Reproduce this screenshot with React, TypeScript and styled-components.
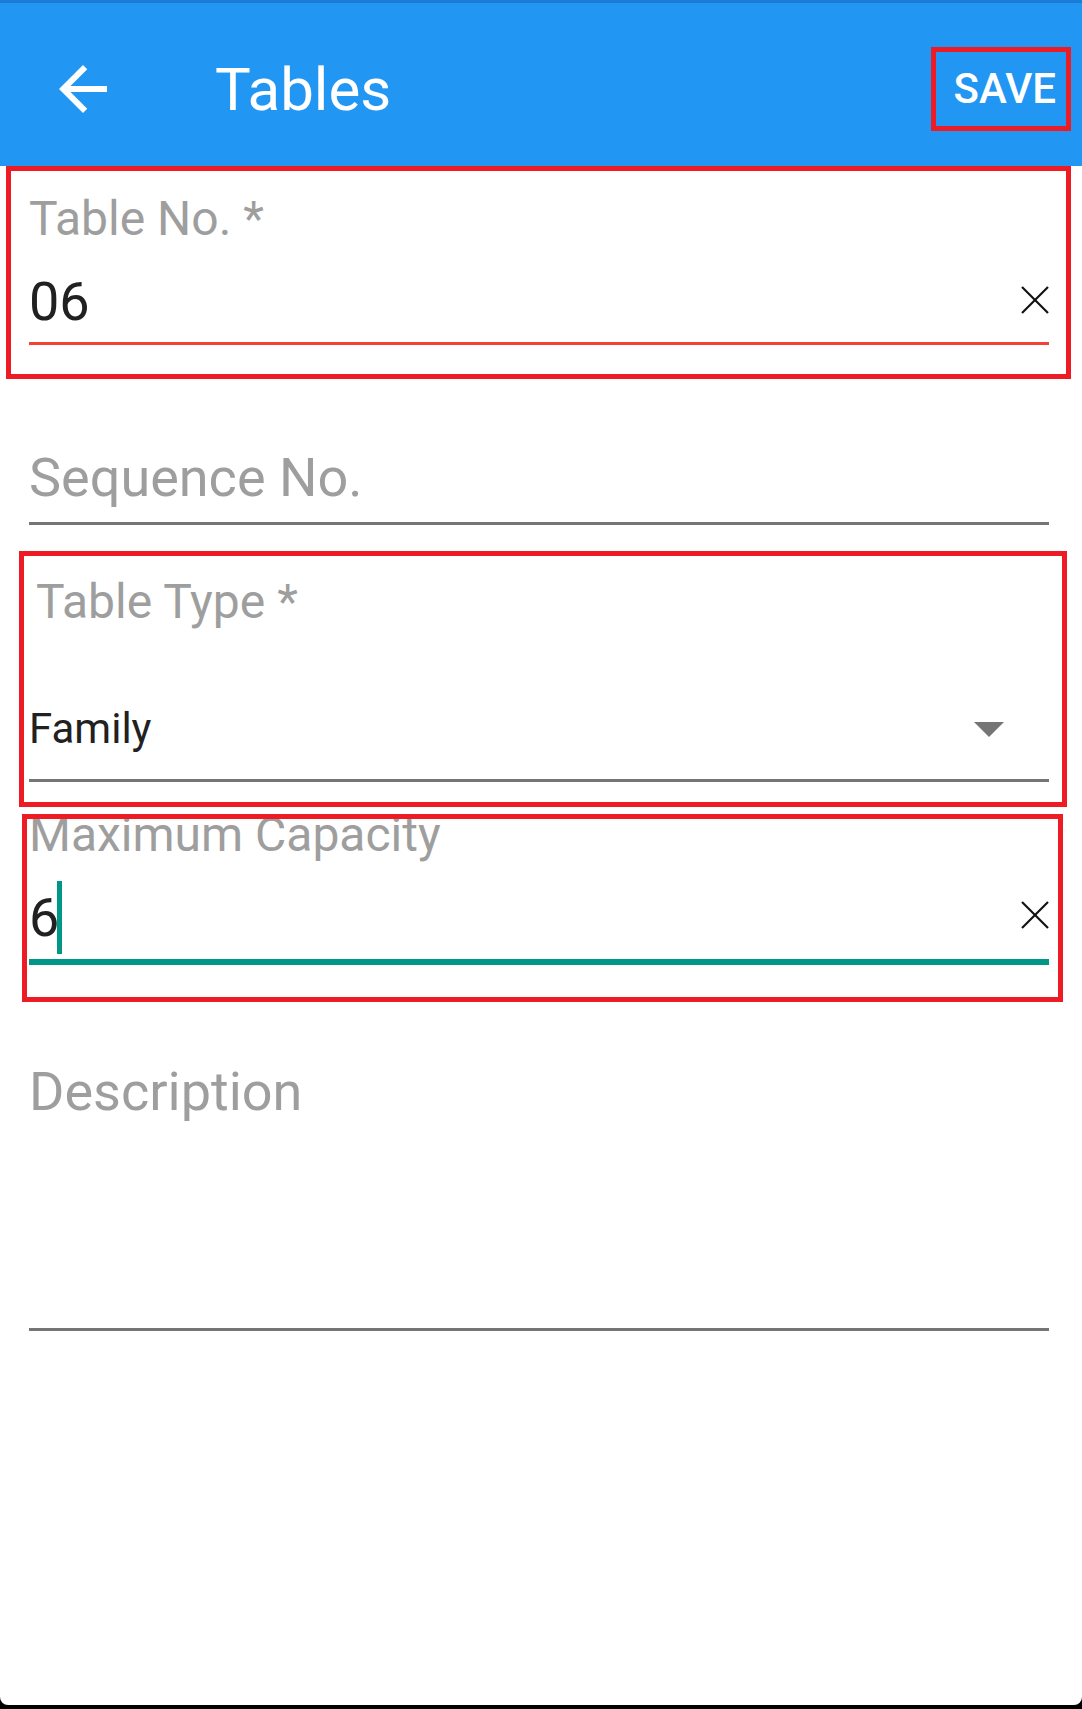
import React from "react";
import styled, { createGlobalStyle } from "styled-components";

const GlobalStyle = createGlobalStyle`
  html, body {
    margin: 0;
    padding: 0;
    background: #000;
  }
  body {
    font-family: Roboto, "Noto Sans", "Liberation Sans", sans-serif;
  }
  * { box-sizing: border-box; }
`;

const Screen = styled.div`
  width: 1082px;
  height: 1709px;
  display: flex;
  flex-direction: column;
  background: #000;
  overflow: hidden;
`;

const StatusStrip = styled.div`
  height: 3px;
  background: #1b7bd6;
  flex: none;
`;

const AppBar = styled.header`
  height: 163px;
  flex: none;
  background: #2196f3;
  display: flex;
  align-items: center;
  padding: 8px 26px 0 47px;
`;

const BackIcon = styled.svg`
  width: 72px;
  height: 72px;
  flex: none;
  fill: #fff;
`;

const Title = styled.h1`
  flex: 1;
  margin: 2px 0 0 96px;
  font-size: 60px;
  line-height: 72px;
  font-weight: 400;
  color: #fff;
`;

const SaveButton = styled.div`
  position: relative;
  font-size: 42px;
  line-height: 50px;
  font-weight: 500;
  color: #fff;
`;

const Mark = styled.div<{ $t: number; $l: number; $r: number; $b: number }>`
  position: absolute;
  top: ${(p) => p.$t}px;
  left: ${(p) => p.$l}px;
  right: ${(p) => p.$r}px;
  bottom: ${(p) => p.$b}px;
  border: 5px solid #ed1c24;
  pointer-events: none;
  z-index: 2;
`;

const Card = styled.main`
  flex: 1;
  background: #fff;
  border-radius: 0 0 8px 8px;
  margin-bottom: 4px;
  display: flex;
  flex-direction: column;
`;

const Field = styled.div<{ $pt: number }>`
  position: relative;
  display: flex;
  flex-direction: column;
  padding: ${(p) => p.$pt}px 33px 0 29px;
`;

const Label = styled.div<{ $size: number; $lh: number; $indent?: number }>`
  font-size: ${(p) => p.$size}px;
  line-height: ${(p) => p.$lh}px;
  color: #9e9e9e;
  padding-left: ${(p) => p.$indent || 0}px;
  white-space: nowrap;
`;

const InputRow = styled.div<{ $h: number; $mt: number }>`
  display: flex;
  align-items: center;
  justify-content: space-between;
  height: ${(p) => p.$h}px;
  margin-top: ${(p) => p.$mt}px;
`;

const ValueWrap = styled.div`
  display: flex;
  align-items: center;
`;

const Value = styled.span<{ $size: number; $lh: number }>`
  font-size: ${(p) => p.$size}px;
  line-height: ${(p) => p.$lh}px;
  color: #212121;
`;

const Cursor = styled.span`
  width: 5px;
  height: 73px;
  margin-left: -2px;
  background: #009688;
`;

const ClearIcon = styled.svg`
  width: 28px;
  height: 28px;
  flex: none;
  margin-bottom: 5px;
  stroke: #111;
  stroke-width: 2.2;
`;

const Caret = styled.svg`
  width: 30px;
  height: 15px;
  flex: none;
  margin-right: 45px;
  fill: #757575;
`;

const Underline = styled.div<{ $h: number; $mt: number; $color: string }>`
  height: ${(p) => p.$h}px;
  margin-top: ${(p) => p.$mt}px;
  background: ${(p) => p.$color};
`;

const Clear = () => (
  <ClearIcon viewBox="0 0 28 28">
    <line x1="1" y1="1" x2="27" y2="27" />
    <line x1="27" y1="1" x2="1" y2="27" />
  </ClearIcon>
);

export default function App() {
  return (
    <Screen>
      <GlobalStyle />
      <StatusStrip />
      <AppBar>
        <BackIcon viewBox="0 0 24 24">
          <path d="M20 11H7.83l5.59-5.59L12 4l-8 8 8 8 1.41-1.41L7.83 13H20v-2z" />
        </BackIcon>
        <Title>Tables</Title>
        <SaveButton>
          SAVE
          <Mark $t={-17} $l={-23} $r={-15} $b={-17} />
        </SaveButton>
      </AppBar>
      <Card>
        <Field $pt={25}>
          <Label $size={48} $lh={56}>Table No. *</Label>
          <InputRow $h={64} $mt={23}>
            <Value $size={54} $lh={64}>06</Value>
            <Clear />
          </InputRow>
          <Underline $h={3} $mt={8} $color="#f44336" />
          <Mark $t={0} $l={6} $r={11} $b={-34} />
        </Field>

        <Field $pt={101}>
          <Label $size={54} $lh={64}>Sequence No.</Label>
          <Underline $h={3} $mt={12} $color="#757575" />
        </Field>

        <Field $pt={49}>
          <Label $size={48} $lh={56} $indent={7}>Table Type *</Label>
          <InputRow $h={50} $mt={74}>
            <Value $size={42} $lh={50}>Family</Value>
            <Caret viewBox="0 0 30 15">
              <polygon points="0,0 30,0 15,15" />
            </Caret>
          </InputRow>
          <Underline $h={3} $mt={25} $color="#757575" />
          <Mark $t={26} $l={19} $r={15} $b={-25} />
        </Field>

        <Field $pt={25}>
          <Label $size={48} $lh={56}>Maximum Capacity</Label>
          <InputRow $h={73} $mt={18}>
            <ValueWrap>
              <Value $size={54} $lh={76}>6</Value>
              <Cursor />
            </ValueWrap>
            <Clear />
          </InputRow>
          <Underline $h={6} $mt={5} $color="#009688" />
          <Mark $t={32} $l={22} $r={19} $b={-37} />
        </Field>

        <Field $pt={95}>
          <Label $size={54} $lh={64}>Description</Label>
          <Underline $h={3} $mt={204} $color="#757575" />
        </Field>
      </Card>
    </Screen>
  );
}
